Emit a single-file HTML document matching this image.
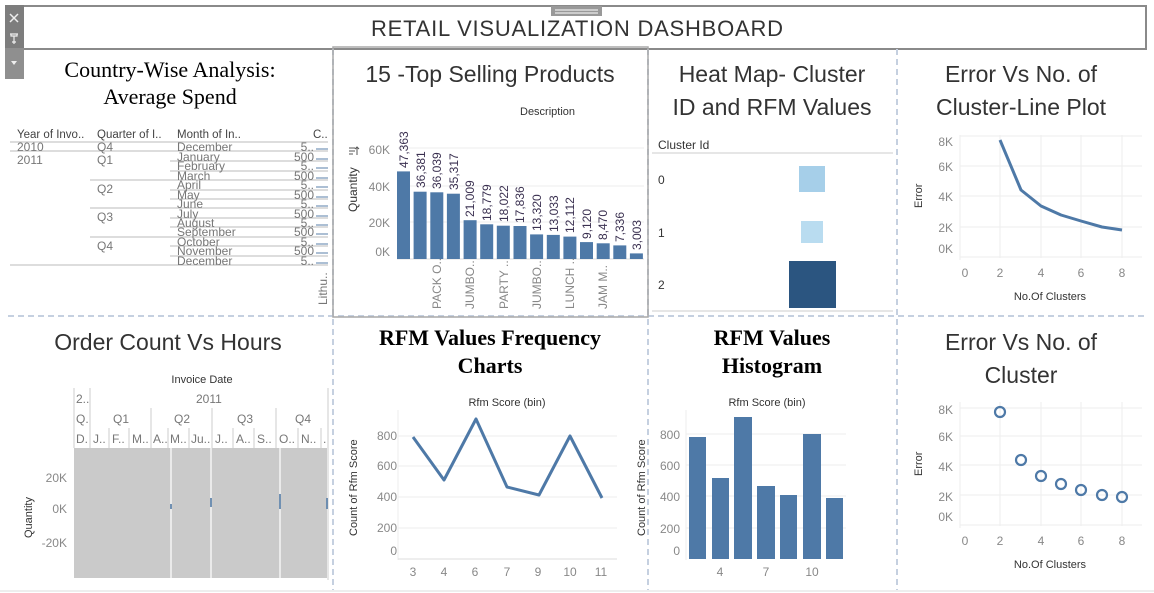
<!DOCTYPE html>
<html><head><meta charset="utf-8"><style>
html,body{margin:0;padding:0;background:#fff;}
svg{display:block;}
text{font-family:"Liberation Sans",sans-serif;}
.t{font-size:23px;fill:#333;text-anchor:middle;}
.s{font-family:"Liberation Serif",serif;font-size:22px;fill:#000;text-anchor:middle;}
.sb{font-family:"Liberation Serif",serif;font-size:22px;font-weight:bold;fill:#000;text-anchor:middle;}
.ax{font-size:12px;fill:#888;}
.lb{font-size:11px;fill:#333;}
.tb{font-size:12px;fill:#777;}
</style></head><body>
<svg width="1154" height="593" viewBox="0 0 1154 593" xmlns="http://www.w3.org/2000/svg">
<rect width="1154" height="593" fill="#fff"/>
<rect x="8" y="6" width="1138" height="43" fill="#fff" stroke="#8a8a8a" stroke-width="2"/>
<rect x="551" y="6" width="51" height="10" fill="#999"/>
<line x1="555" y1="10" x2="598" y2="10" stroke="#fff"/><line x1="555" y1="13" x2="598" y2="13" stroke="#fff"/>
<text x="577" y="36" class="t" style="font-size:22px" textLength="412">RETAIL VISUALIZATION DASHBOARD</text>
<rect x="5" y="5" width="19" height="43" fill="#7d7d7d"/>
<rect x="5" y="48" width="19" height="31" fill="#8f8f8f"/>
<path d="M10 14 L18 22 M18 14 L10 22" stroke="#eee" stroke-width="1.5"/>
<path d="M10 34 H18 M11 34 V36 H17 V34 M14 36 V44 M12 42 H16" stroke="#eee" stroke-width="1.2" fill="none"/>
<path d="M11 61 L17 61 L14 65 Z" fill="#eee"/>
<g stroke="#c5d0e0" stroke-width="2" stroke-dasharray="6,4">
<line x1="333" y1="49" x2="333" y2="590"/>
<line x1="648" y1="49" x2="648" y2="590"/>
<line x1="897" y1="49" x2="897" y2="590"/>
<line x1="8" y1="316" x2="1146" y2="316"/>
</g>
<rect x="333" y="47" width="315" height="270" fill="none" stroke="#a9a9a9" stroke-width="1.5"/>
<line x1="0" y1="591" x2="1154" y2="591" stroke="#eee" stroke-width="2"/>

<text x="170" y="77" class="s">Country-Wise Analysis:</text>
<text x="170" y="104" class="s">Average Spend</text>
<g class="lb" style="font-size:11.5px;fill:#444">
<text x="17" y="138">Year of Invo..</text><text x="97" y="138">Quarter of I..</text><text x="177" y="138">Month of In..</text><text x="313" y="138">C..</text>
</g>
<g stroke="#bbb" stroke-width="1">
<line x1="10" y1="142" x2="328" y2="142"/>
<line x1="10" y1="151" x2="328" y2="151"/>
<line x1="170" y1="161" x2="328" y2="161"/><line x1="170" y1="171" x2="328" y2="171"/>
<line x1="90" y1="180" x2="328" y2="180"/>
<line x1="170" y1="190" x2="328" y2="190"/><line x1="170" y1="199" x2="328" y2="199"/>
<line x1="90" y1="208" x2="328" y2="208"/>
<line x1="170" y1="218" x2="328" y2="218"/><line x1="170" y1="227" x2="328" y2="227"/>
<line x1="90" y1="237" x2="328" y2="237"/>
<line x1="170" y1="246" x2="328" y2="246"/><line x1="170" y1="256" x2="328" y2="256"/>
<line x1="10" y1="265" x2="328" y2="265"/>
</g>
<g class="tb">
<text x="17" y="151">2010</text><text x="17" y="164">2011</text>
<text x="97" y="151">Q4</text><text x="97" y="164">Q1</text><text x="97" y="193">Q2</text><text x="97" y="221">Q3</text><text x="97" y="250">Q4</text>
<text x="177" y="151">December</text><text x="177" y="161">January</text><text x="177" y="170">February</text><text x="177" y="180">March</text>
<text x="177" y="189">April</text><text x="177" y="199">May</text><text x="177" y="208">June</text><text x="177" y="218">July</text>
<text x="177" y="227">August</text><text x="177" y="236">September</text><text x="177" y="246">October</text><text x="177" y="255">November</text><text x="177" y="265">December</text>
</g>
<g class="tb" text-anchor="end">
<text x="314" y="151">5..</text><text x="314" y="161">500</text><text x="314" y="170">5..</text><text x="314" y="180">500</text>
<text x="314" y="189">5..</text><text x="314" y="199">500</text><text x="314" y="208">5..</text><text x="314" y="218">500</text>
<text x="314" y="227">5..</text><text x="314" y="236">500</text><text x="314" y="246">5..</text><text x="314" y="255">500</text><text x="314" y="265">5..</text>
</g>
<g stroke="#5a7fa8" stroke-width="1">
<path d="M316 149 H328 M316 159 H328 M316 168 H328 M316 178 H328 M316 187 H328 M316 197 H328 M316 206 H328 M316 216 H328 M316 225 H328 M316 234 H328 M316 244 H328 M316 253 H328 M316 263 H328"/>
</g>
<text transform="translate(327,305) rotate(-90)" class="tb">Lithu..</text>

<text x="490" y="82" class="t">15 -Top Selling Products</text>
<text x="520" y="115" class="lb">Description</text>
<g stroke="#eee"><line x1="398" y1="148" x2="644" y2="148"/><line x1="398" y1="186" x2="644" y2="186"/><line x1="398" y1="222" x2="644" y2="222"/></g>
<line x1="397" y1="259" x2="644" y2="259" stroke="#ddd"/>
<g class="ax" text-anchor="end"><text x="390" y="154">60K</text><text x="390" y="191">40K</text><text x="390" y="227">20K</text><text x="390" y="256">0K</text></g>
<text transform="translate(357,212) rotate(-90)" class="lb" style="font-size:12px">Quantity</text>
<path d="M349 148 H355 M349 151 H355 M349 154 H353 M357 147 V155 M355 149 L357 147 L359 149" stroke="#555" fill="none" stroke-width="1"/>
<g fill="#4e79a7">
<rect x="397.0" y="171.4" width="13" height="87.6"/>
<rect x="413.6" y="191.7" width="13" height="67.3"/>
<rect x="430.3" y="192.3" width="13" height="66.7"/>
<rect x="446.9" y="193.7" width="13" height="65.3"/>
<rect x="463.6" y="220.2" width="13" height="38.8"/>
<rect x="480.2" y="224.3" width="13" height="34.7"/>
<rect x="496.8" y="225.7" width="13" height="33.3"/>
<rect x="513.5" y="226.0" width="13" height="33.0"/>
<rect x="530.1" y="234.4" width="13" height="24.6"/>
<rect x="546.8" y="234.9" width="13" height="24.1"/>
<rect x="563.4" y="236.6" width="13" height="22.4"/>
<rect x="580.0" y="242.1" width="13" height="16.9"/>
<rect x="596.7" y="243.3" width="13" height="15.7"/>
<rect x="613.3" y="245.4" width="13" height="13.6"/>
<rect x="629.9" y="253.4" width="13" height="5.6"/>
</g>
<g style="font-size:12px;fill:#3a3050">
<text transform="translate(408,168) rotate(-90)">47,363</text>
<text transform="translate(425,188) rotate(-90)">36,381</text>
<text transform="translate(441,189) rotate(-90)">36,039</text>
<text transform="translate(458,190) rotate(-90)">35,317</text>
<text transform="translate(474,217) rotate(-90)">21,009</text>
<text transform="translate(491,221) rotate(-90)">18,779</text>
<text transform="translate(508,222) rotate(-90)">18,022</text>
<text transform="translate(524,223) rotate(-90)">17,836</text>
<text transform="translate(541,231) rotate(-90)">13,320</text>
<text transform="translate(558,232) rotate(-90)">13,033</text>
<text transform="translate(574,233) rotate(-90)">12,112</text>
<text transform="translate(591,239) rotate(-90)">9,120</text>
<text transform="translate(607,240) rotate(-90)">8,470</text>
<text transform="translate(624,242) rotate(-90)">7,336</text>
<text transform="translate(641,250) rotate(-90)">3,003</text>
</g>
<g class="ax">
<text transform="translate(441,309) rotate(-90)">PACK O..</text>
<text transform="translate(474,309) rotate(-90)">JUMBO..</text>
<text transform="translate(508,309) rotate(-90)">PARTY ..</text>
<text transform="translate(541,309) rotate(-90)">JUMBO..</text>
<text transform="translate(574,309) rotate(-90)">LUNCH ..</text>
<text transform="translate(607,309) rotate(-90)">JAM M..</text>
</g>

<text x="772" y="82" class="t">Heat Map- Cluster</text>
<text x="772" y="115" class="t">ID and RFM Values</text>
<text x="658" y="149" class="lb" style="font-size:12px">Cluster Id</text>
<line x1="652" y1="153" x2="893" y2="153" stroke="#ccc"/>
<line x1="652" y1="311" x2="893" y2="311" stroke="#ccc"/>
<g class="lb" style="font-size:12px"><text x="658" y="184">0</text><text x="658" y="237">1</text><text x="658" y="289">2</text></g>
<rect x="799" y="166" width="26" height="26" fill="#a6cfe9"/>
<rect x="801" y="221" width="22" height="22" fill="#b9dcf0"/>
<rect x="789" y="261" width="47" height="47" fill="#2b5580"/>

<text x="1021" y="82" class="t">Error Vs No. of</text>
<text x="1021" y="115" class="t">Cluster-Line Plot</text>
<g stroke="#eee">
<line x1="960" y1="136" x2="1142" y2="136"/><line x1="960" y1="166" x2="1142" y2="166"/><line x1="960" y1="196" x2="1142" y2="196"/><line x1="960" y1="227" x2="1142" y2="227"/><line x1="960" y1="257" x2="1142" y2="257"/>
<line x1="1000" y1="135" x2="1000" y2="258"/><line x1="1041" y1="135" x2="1041" y2="258"/><line x1="1081" y1="135" x2="1081" y2="258"/><line x1="1122" y1="135" x2="1122" y2="258"/><line x1="960" y1="135" x2="960" y2="260"/>
</g>
<g class="ax" text-anchor="end"><text x="953" y="146">8K</text><text x="953" y="171">6K</text><text x="953" y="201">4K</text><text x="953" y="232">2K</text><text x="953" y="253">0K</text></g>
<g class="ax" text-anchor="middle"><text x="965" y="277">0</text><text x="1000" y="277">2</text><text x="1041" y="277">4</text><text x="1081" y="277">6</text><text x="1122" y="277">8</text></g>
<text x="1050" y="300" class="lb" text-anchor="middle">No.Of Clusters</text>
<text transform="translate(922,208) rotate(-90)" class="lb">Error</text>
<polyline points="1000,140 1021,190 1041,206 1061,215 1081,221 1102,227 1122,230" fill="none" stroke="#4e79a7" stroke-width="3" stroke-linejoin="round"/>

<text x="168" y="350" class="t">Order Count Vs Hours</text>
<text x="202" y="383" class="lb" text-anchor="middle">Invoice Date</text>
<g stroke="#ccc"><line x1="74" y1="388" x2="74" y2="448"/><line x1="90" y1="388" x2="90" y2="448"/><line x1="151" y1="408" x2="151" y2="448"/><line x1="212" y1="408" x2="212" y2="448"/><line x1="276" y1="408" x2="276" y2="448"/><line x1="328" y1="388" x2="328" y2="580"/>
<line x1="109" y1="428" x2="109" y2="448"/><line x1="129" y1="428" x2="129" y2="448"/><line x1="168" y1="428" x2="168" y2="448"/><line x1="189" y1="428" x2="189" y2="448"/><line x1="233" y1="428" x2="233" y2="448"/><line x1="254" y1="428" x2="254" y2="448"/><line x1="298" y1="428" x2="298" y2="448"/><line x1="321" y1="428" x2="321" y2="448"/></g>
<g class="tb">
<text x="76" y="403">2..</text><text x="196" y="403">2011</text>
<text x="76" y="423">Q.</text><text x="113" y="423">Q1</text><text x="174" y="423">Q2</text><text x="237" y="423">Q3</text><text x="295" y="423">Q4</text>
<text x="76" y="443">D.</text><text x="93" y="443">J..</text><text x="112" y="443">F..</text><text x="132" y="443">M..</text><text x="153" y="443">A..</text><text x="170" y="443">M..</text><text x="191" y="443">Ju..</text><text x="215" y="443">J..</text><text x="236" y="443">A..</text><text x="257" y="443">S..</text><text x="279" y="443">O..</text><text x="301" y="443">N..</text><text x="323" y="443">.</text>
</g>
<rect x="74" y="448" width="253" height="130" fill="#cacaca"/>
<g stroke="#fff" stroke-width="1.2"><line x1="171" y1="448" x2="171" y2="578"/><line x1="211" y1="448" x2="211" y2="578"/><line x1="280" y1="448" x2="280" y2="578"/></g>
<g stroke="#4e79a7" stroke-width="1.5"><line x1="171" y1="504" x2="171" y2="509"/><line x1="211" y1="498" x2="211" y2="507"/><line x1="280" y1="494" x2="280" y2="509"/><line x1="327" y1="498" x2="327" y2="509"/></g>
<g class="ax" text-anchor="end"><text x="67" y="482">20K</text><text x="67" y="513">0K</text><text x="67" y="547">-20K</text></g>
<text transform="translate(32,538) rotate(-90)" class="lb">Quantity</text>

<text x="490" y="345" class="sb">RFM Values Frequency</text>
<text x="490" y="373" class="sb">Charts</text>
<text x="507" y="406" class="lb" text-anchor="middle">Rfm Score (bin)</text>
<g stroke="#eee"><line x1="398" y1="436" x2="617" y2="436"/><line x1="398" y1="466" x2="617" y2="466"/><line x1="398" y1="497" x2="617" y2="497"/><line x1="398" y1="528" x2="617" y2="528"/><line x1="398" y1="410" x2="398" y2="560"/></g>
<line x1="398" y1="559" x2="617" y2="559" stroke="#ddd"/>
<g class="ax" text-anchor="end"><text x="397" y="440">800</text><text x="397" y="470">600</text><text x="397" y="501">400</text><text x="397" y="532">200</text><text x="397" y="555">0</text></g>
<g class="ax" text-anchor="middle"><text x="413" y="576">3</text><text x="444" y="576">4</text><text x="475" y="576">6</text><text x="507" y="576">7</text><text x="538" y="576">9</text><text x="570" y="576">10</text><text x="601" y="576">11</text></g>
<text transform="translate(357,536) rotate(-90)" class="lb">Count of Rfm Score</text>
<polyline points="413,437 444,480 476,419 507,487 539,495 570,436 602,498" fill="none" stroke="#4e79a7" stroke-width="3" stroke-linejoin="round"/>

<text x="772" y="345" class="sb">RFM Values</text>
<text x="772" y="373" class="sb">Histogram</text>
<text x="767" y="406" class="lb" text-anchor="middle">Rfm Score (bin)</text>
<g stroke="#eee"><line x1="686" y1="434" x2="846" y2="434"/><line x1="686" y1="465" x2="846" y2="465"/><line x1="686" y1="496" x2="846" y2="496"/><line x1="686" y1="528" x2="846" y2="528"/><line x1="686" y1="410" x2="686" y2="560"/></g>
<g class="ax" text-anchor="end"><text x="680" y="439">800</text><text x="680" y="470">600</text><text x="680" y="501">400</text><text x="680" y="533">200</text><text x="680" y="555">0</text></g>
<g fill="#4e79a7">
<rect x="689" y="437" width="17" height="122"/><rect x="712" y="478" width="17" height="81"/><rect x="734" y="417" width="18" height="142"/><rect x="757" y="486" width="18" height="73"/><rect x="780" y="495" width="17" height="64"/><rect x="803" y="434" width="18" height="125"/><rect x="826" y="498" width="17" height="61"/>
</g>
<g class="ax" text-anchor="middle"><text x="720" y="576">4</text><text x="766" y="576">7</text><text x="812" y="576">10</text></g>
<text transform="translate(645,536) rotate(-90)" class="lb">Count of Rfm Score</text>

<text x="1021" y="350" class="t">Error Vs No. of</text>
<text x="1021" y="383" class="t">Cluster</text>
<g stroke="#eee">
<line x1="960" y1="408" x2="1142" y2="408"/><line x1="960" y1="436" x2="1142" y2="436"/><line x1="960" y1="465" x2="1142" y2="465"/><line x1="960" y1="495" x2="1142" y2="495"/><line x1="960" y1="525" x2="1142" y2="525"/>
<line x1="1000" y1="402" x2="1000" y2="526"/><line x1="1041" y1="402" x2="1041" y2="526"/><line x1="1081" y1="402" x2="1081" y2="526"/><line x1="1122" y1="402" x2="1122" y2="526"/><line x1="960" y1="402" x2="960" y2="528"/>
</g>
<g class="ax" text-anchor="end"><text x="953" y="414">8K</text><text x="953" y="441">6K</text><text x="953" y="471">4K</text><text x="953" y="501">2K</text><text x="953" y="521">0K</text></g>
<g class="ax" text-anchor="middle"><text x="965" y="545">0</text><text x="1000" y="545">2</text><text x="1041" y="545">4</text><text x="1081" y="545">6</text><text x="1122" y="545">8</text></g>
<text x="1050" y="568" class="lb" text-anchor="middle">No.Of Clusters</text>
<text transform="translate(922,476) rotate(-90)" class="lb">Error</text>
<g fill="none" stroke="#4e79a7" stroke-width="2.2">
<circle cx="1000" cy="412" r="5"/><circle cx="1021" cy="460" r="5"/><circle cx="1041" cy="476" r="5"/><circle cx="1061" cy="484" r="5"/><circle cx="1081" cy="490" r="5"/><circle cx="1102" cy="495" r="5"/><circle cx="1122" cy="497" r="5"/>
</g>
</svg>
</body></html>
